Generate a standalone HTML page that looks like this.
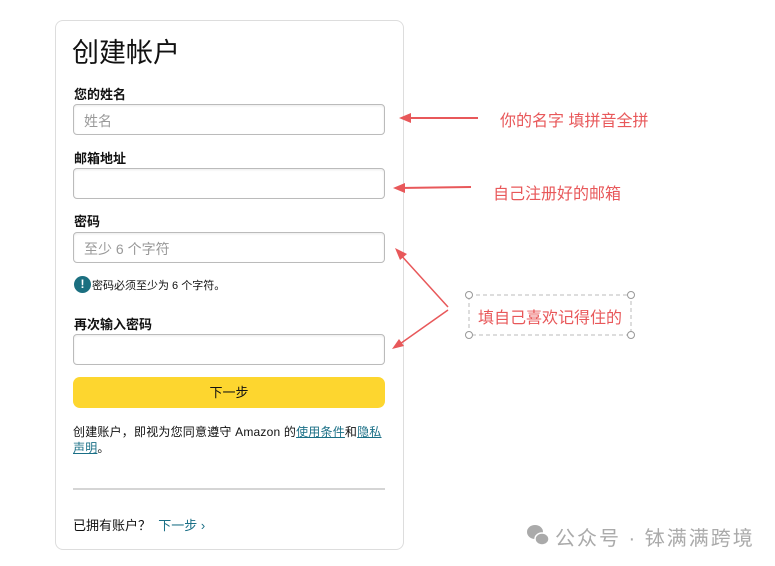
<!DOCTYPE html>
<html><head><meta charset="utf-8"><style>
*{margin:0;padding:0;box-sizing:border-box}
body{width:775px;height:566px;background:#fff;position:relative;overflow:hidden;font-family:"Liberation Sans","Noto Sans CJK SC",sans-serif;color:#111}
.a{position:absolute}
.card{left:55px;top:20px;width:349px;height:530px;border:1px solid #ddd;border-radius:8px}
.lbl{font-size:13px;font-weight:bold;left:74px}
.in{left:73px;width:312px;height:31px;border:1px solid #bbb;border-radius:4px;box-shadow:inset 0 1px 2px rgba(0,0,0,.08);font-size:14px;color:#999;padding:6px 10px}
.note{color:#e8585a;font-size:16px;white-space:nowrap}
a{color:#1a6f86;text-decoration:underline}
</style></head><body>
<div class="a card"></div>
<div class="a" style="left:72px;top:36px;font-size:27px;line-height:34px">创建帐户</div>
<div class="a lbl" style="top:84px">您的姓名</div>
<div class="a in" style="top:104px">姓名</div>
<div class="a lbl" style="top:148px">邮箱地址</div>
<div class="a in" style="top:168px"></div>
<div class="a lbl" style="top:211px">密码</div>
<div class="a in" style="top:232px">至少 6 个字符</div>
<div class="a" style="left:74px;top:276px;width:17px;height:17px;border-radius:50%;background:#1b6f80;color:#fff;font-size:12px;font-weight:bold;text-align:center;line-height:17px">!</div>
<div class="a" style="left:92px;top:277px;font-size:11px">密码必须至少为 6 个字符。</div>
<div class="a lbl" style="top:314px">再次输入密码</div>
<div class="a in" style="top:334px"></div>
<div class="a" style="left:73px;top:377px;width:312px;height:31px;border-radius:7px;background:#fdd62f;font-size:13px;text-align:center;line-height:31px">下一步</div>
<div class="a" style="left:73px;top:424px;width:312px;font-size:12px;line-height:16px;letter-spacing:.2px">创建账户，即视为您同意遵守 Amazon 的<a>使用条件</a>和<a>隐私</a><br><a>声明</a>。</div>
<div class="a" style="left:73px;top:488px;width:312px;height:2px;background:#d5d5d5"></div>
<div class="a" style="left:73px;top:515px;font-size:13px">已拥有账户？ <span style="color:#1a6f86">&nbsp;下一步 ›</span></div>
<svg class="a" style="left:0;top:0" width="775" height="566">
<g stroke="#e8585a" stroke-width="2" fill="#e8585a">
<line x1="478" y1="118" x2="404" y2="118"/><polygon points="399,118 411,113 411,123" stroke="none"/>
<line x1="471" y1="187" x2="399" y2="188"/><polygon points="393,188 405,183 405,193" stroke="none"/>
<line x1="448" y1="307" x2="399" y2="253" stroke-width="1.5"/><polygon points="395,248 407,254 400,260" stroke="none"/>
<line x1="448" y1="310" x2="397" y2="346" stroke-width="1.5"/><polygon points="392,349 399,339 404,346" stroke="none"/>
</g>
<rect x="469" y="295" width="162" height="40" fill="none" stroke="#bbb" stroke-dasharray="4,3"/>
<g fill="#fff" stroke="#999"><circle cx="469" cy="295" r="3.5"/><circle cx="631" cy="295" r="3.5"/><circle cx="469" cy="335" r="3.5"/><circle cx="631" cy="335" r="3.5"/></g>
<g fill="#aaa"><ellipse cx="535" cy="532" rx="8" ry="7"/><ellipse cx="542" cy="539" rx="7" ry="6" stroke="#fff" stroke-width="1.5"/></g>
</svg>
<div class="a note" style="left:500px;top:107px">你的名字 填拼音全拼</div>
<div class="a note" style="left:493px;top:180px">自己注册好的邮箱</div>
<div class="a note" style="left:478px;top:304px">填自己喜欢记得住的</div>
<div class="a" style="left:555px;top:522px;font-size:20px;letter-spacing:2px;color:#aaa;white-space:nowrap">公众号 · 钵满满跨境</div>
</body></html>
